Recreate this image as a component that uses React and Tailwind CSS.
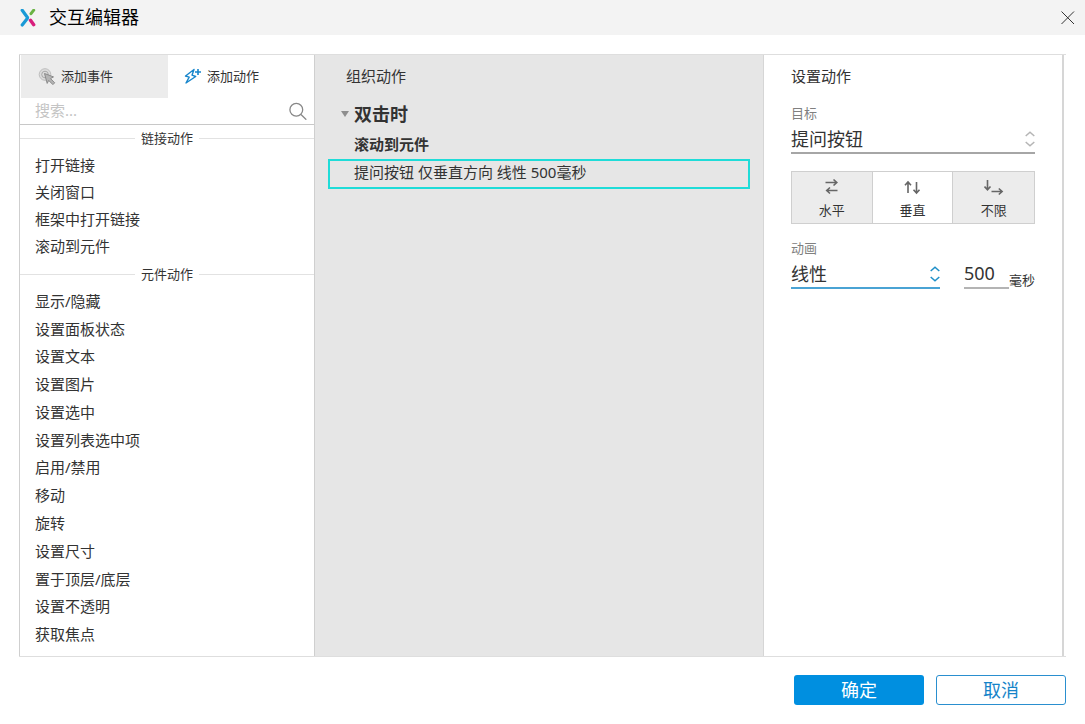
import React from "react";

const linkActions = ["打开链接", "关闭窗口", "框架中打开链接", "滚动到元件"];
const widgetActions = [
  "显示/隐藏",
  "设置面板状态",
  "设置文本",
  "设置图片",
  "设置选中",
  "设置列表选中项",
  "启用/禁用",
  "移动",
  "旋转",
  "设置尺寸",
  "置于顶层/底层",
  "设置不透明",
  "获取焦点",
];

function Logo() {
  return (
    <svg className="size-[18px]" viewBox="0 0 18 18" fill="none" strokeLinecap="round" aria-hidden="true">
      <path d="M3.2 1.3L8.3 8.2Q8.7 8.8 8.3 9.4L3.2 16" stroke="#1a9ad6" strokeWidth="3.2" strokeLinejoin="round" />
      <path d="M14.7 1.2L12 4.7" stroke="#6ab344" strokeWidth="3" />
      <path d="M11.5 11.3L14.7 15.7" stroke="#d81e7c" strokeWidth="3.4" />
    </svg>
  );
}

function EventIcon() {
  return (
    <svg className="size-[18px]" viewBox="0 0 18 18" fill="none" aria-hidden="true">
      <circle cx="7" cy="6.5" r="5.8" fill="#dcdcdc" stroke="#bdbdbd" />
      <circle cx="7" cy="6.5" r="3.3" stroke="#a8a8a8" />
      <path d="M6.5 5.5l9 3.4-3 1.7 4.2 4.2-1.8 1.8-4.2-4.2-1.5 3z" fill="#b4b4b4" stroke="#8a8a8a" strokeLinejoin="round" />
    </svg>
  );
}

function BoltIcon() {
  return (
    <svg className="size-[18px]" viewBox="0 0 18 18" fill="none" stroke="#1886cc" strokeWidth="1.4" strokeLinejoin="round" aria-hidden="true">
      <path d="M10 1.5L1.5 8l3.7 1.2L2 15l9.7-6.5L8 7.2z" />
      <path d="M14 1v6M11 4h6" strokeWidth="1.6" />
    </svg>
  );
}

function SearchIcon() {
  return (
    <svg className="size-[18px]" viewBox="0 0 18 18" fill="none" stroke="#888" strokeWidth="1.3" aria-hidden="true">
      <circle cx="7.3" cy="7.8" r="6.4" />
      <path d="M12 12.5l5.3 5.2" />
    </svg>
  );
}

function Chevrons() {
  return (
    <svg className="h-4 w-[10px]" viewBox="0 0 10 16" fill="none" stroke="currentColor" strokeWidth="1.5" aria-hidden="true">
      <path d="M.7 5L5 1.2 9.3 5M.7 11L5 14.8 9.3 11" />
    </svg>
  );
}

const directions = [
  { label: "水平", path: "M3.5 4.5H15M11.5 1.5l3.3 3-3.3 3M15.500 12.500H4.500M8 9.500l-3.300 3 3.300 3" },
  { label: "垂直", path: "M6 15V4M3 7.3L6 4l3 3.300M14.500 4v11M11.500 11.700l3 3.300 3-3.300" },
  { label: "不限", path: "M3.500 2v9.500M.5 8.500l3 3.300 3-3.300M7.500 13.500H18M14.800 10.500l3.300 3-3.300 3" },
];

function SectionTitle({ children }) {
  return (
    <h2 className="flex h-[26px] shrink-0 items-center gap-1.5 text-[13px] leading-[26px] before:h-px before:flex-1 before:bg-[#e2e2e2] after:h-px after:flex-1 after:bg-[#e2e2e2]">
      {children}
    </h2>
  );
}

function ActionItem({ label }) {
  return (
    <li className="flex">
      <button type="button" className="flex w-full items-center px-[15px] text-left text-[15px] leading-5">
        {label}
      </button>
    </li>
  );
}

function SelectField({ id, label, value, options, active }) {
  return (
    <div className="min-w-0 flex-1">
      <label htmlFor={id} className="block text-[13px] leading-4 text-[#808080]">
        {label}
      </label>
      <div className={active ? "relative border-b-2 border-[#4aa3d4] text-[#1e8fc8]" : "relative border-b-2 border-[#a6a6a6] text-[#b5b5b5]"}>
        <select id={id} defaultValue={value} className="block h-[31px] w-full appearance-none bg-transparent pt-1 pr-4 text-lg leading-[26px] text-[#333] outline-none">
          {options.map((o) => (
            <option key={o}>{o}</option>
          ))}
        </select>
        <span className="pointer-events-none absolute inset-y-0 right-0 flex items-center pt-1">
          <Chevrons />
        </span>
      </div>
    </div>
  );
}

export default function App() {
  return (
    <div className="flex min-h-screen flex-col bg-white font-['Noto_Sans','Noto_Sans_CJK_SC',sans-serif] text-[#333]">
      <header className="flex h-[35px] items-center bg-[#f3f3f3] pr-[10px] pl-[19px]">
        <Logo />
        <h1 className="ml-3 flex-1 pb-0.5 text-lg leading-6 text-black">交互编辑器</h1>
        <button type="button" aria-label="关闭">
          <svg className="size-[15px]" viewBox="0 0 15 15" stroke="#333" aria-hidden="true">
            <path d="M1.5 1.5L14 14M14 1.5L1.5 14" />
          </svg>
        </button>
      </header>

      <main className="mx-[19px] mt-[19px] flex flex-1 border-y border-[#dedede] pr-[2px]">
        <section className="flex w-[296px] shrink-0 flex-col border-x border-[#cfcfcf]">
          <div className="flex h-[43px]">
            <button type="button" className="ml-px flex flex-1 items-center gap-[5px] bg-[#ececec] pl-[17px] text-[13px]">
              <EventIcon />
              添加事件
            </button>
            <button type="button" className="flex flex-1 items-center gap-[5px] pl-4 text-[13px]">
              <BoltIcon />
              添加动作
            </button>
          </div>
          <div className="flex h-[27px] items-center border-b border-[#c8c8c8] pr-[7px] pl-[15px]">
            <input type="search" aria-label="搜索" placeholder="搜索..." className="min-w-0 flex-1 bg-transparent pb-0.5 text-[15px] leading-5 outline-none placeholder:text-[#c4c4c4]" />
            <SearchIcon />
          </div>
          <SectionTitle>链接动作</SectionTitle>
          <ul className="grid auto-rows-[27px] pb-0.5">
            {linkActions.map((a) => (
              <ActionItem key={a} label={a} />
            ))}
          </ul>
          <SectionTitle>元件动作</SectionTitle>
          <ul className="grid flex-1 auto-rows-fr pb-2">
            {widgetActions.map((a) => (
              <ActionItem key={a} label={a} />
            ))}
          </ul>
        </section>

        <section className="min-w-0 flex-1 bg-[#e6e6e6] px-[13px] pt-[11px]">
          <h2 className="pl-[18px] text-[15px] leading-5">组织动作</h2>
          <div className="mt-4 flex h-6 items-center gap-1 pl-3">
            <svg className="size-[10px]" viewBox="0 0 10 10" fill="#8e8e8e" aria-hidden="true">
              <path d="M1 2h8L5 8z" />
            </svg>
            <h3 className="text-lg leading-6 font-bold">双击时</h3>
          </div>
          <h4 className="mt-1.5 pl-[26px] text-[15px] leading-6 font-bold">滚动到元件</h4>
          <button type="button" className="mt-[3px] block h-[30px] w-full border-2 border-[#1fdcd8] pb-1 pl-6 text-left text-[15px] leading-[22px]">
            提问按钮 仅垂直方向 线性 500毫秒
          </button>
        </section>

        <section className="w-[301px] shrink-0 border-r-2 border-l border-[#d6d6d6] px-[27px] pt-[11px]">
          <h2 className="text-[15px] leading-5">设置动作</h2>
          <div className="mt-[19px] flex">
            <SelectField id="target" label="目标" value="提问按钮" options={["提问按钮"]} />
          </div>
          <div className="mt-[17px] grid h-[53px] grid-cols-3 divide-x divide-[#cfcfcf] border border-[#cfcfcf]">
            {directions.map((d) => {
              const active = d.label === "垂直";
              return (
                <button
                  key={d.label}
                  type="button"
                  aria-pressed={active}
                  className={active ? "flex flex-col items-center pt-1.5 text-[13px] leading-5" : "flex flex-col items-center bg-[#ececec] pt-1.5 text-[13px] leading-5"}
                >
                  <svg className="mb-1 h-[18px] w-5" viewBox="0 0 20 18" fill="none" stroke="#666" strokeWidth="1.6" aria-hidden="true">
                    <path d={d.path} />
                  </svg>
                  {d.label}
                </button>
              );
            })}
          </div>
          <div className="mt-4 flex items-end">
            <SelectField id="easing" label="动画" value="线性" options={["线性"]} active />
            <input id="duration" type="text" defaultValue="500" className="ml-6 h-[30px] w-[45px] border-b-2 border-[#b4b4b4] text-lg outline-none" />
            <label htmlFor="duration" className="text-[13px] leading-[18px]">
              毫秒
            </label>
          </div>
        </section>
      </main>

      <footer className="mx-[19px] flex justify-end gap-3 pt-[18px] pb-[19px]">
        <button type="button" className="h-[30px] w-[130px] rounded-[3px] bg-[#008fe0] text-lg leading-7 text-white">
          确定
        </button>
        <button type="button" className="h-[30px] w-[130px] rounded-[3px] border border-[#2a8fcf] text-lg leading-7 text-[#1584c9]">
          取消
        </button>
      </footer>
    </div>
  );
}
